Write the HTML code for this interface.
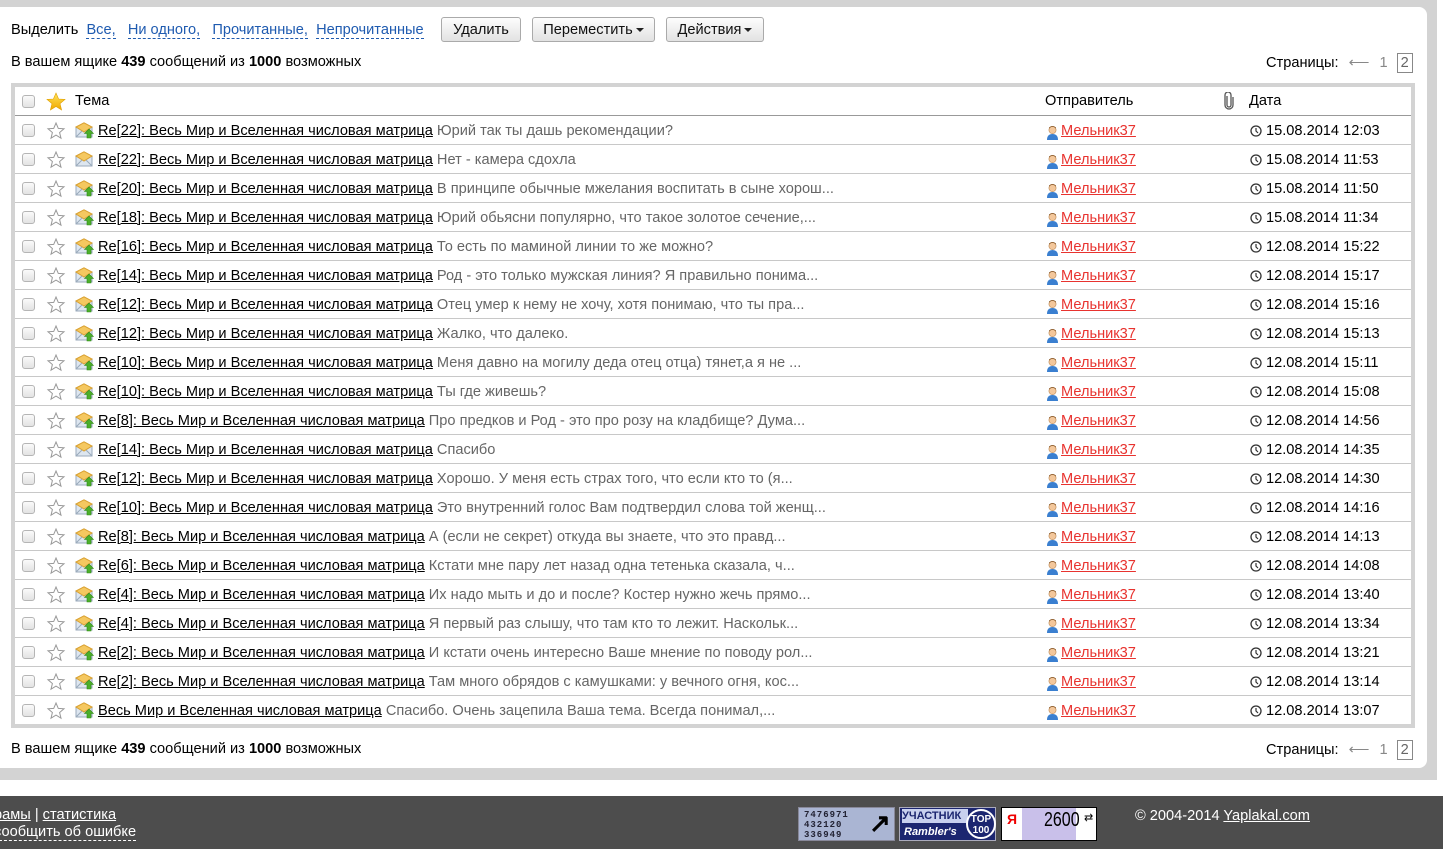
<!DOCTYPE html>
<html><head><meta charset="utf-8"><style>
*{margin:0;padding:0;box-sizing:border-box}
body{width:1443px;height:849px;overflow:hidden;background:#fff;font-family:"Liberation Sans",Arial,sans-serif;font-size:14.6px;color:#000;position:relative}
#gray{position:absolute;left:0;top:0;width:1437px;height:780px;background:#d3d3d3}
#panel{position:absolute;left:0;top:7px;width:1427px;height:761px;background:#fff;border-radius:0 8px 8px 0}
.abs{position:absolute;white-space:nowrap}
.dl{color:#1f5bb0;border-bottom:1px dashed #1f5bb0;text-decoration:none}
.btn{position:absolute;top:17px;height:25px;border:1px solid #aaa;border-radius:3px;background:linear-gradient(#fdfdfd,#e2e2e2);font-size:14.6px;line-height:24px;text-align:center;color:#111}
.tri{display:inline-block;width:0;height:0;border-left:4px solid transparent;border-right:4px solid transparent;border-top:4px solid #222;vertical-align:middle;margin-left:3px}
#tbl{position:absolute;left:11px;top:83px;width:1404px;height:645px;border:4px solid #d3d3d3;background:#fff}
.row{position:absolute;left:0;width:1396px;height:29px;border-bottom:1px solid #c8c8c8}
.cb{position:absolute;left:7px;top:8px;width:13px;height:13px;border:1px solid #b5b5b5;border-radius:3px;background:linear-gradient(#fafafa,#e3e3e3)}
.st{position:absolute;left:31px;top:5px}
.env{position:absolute;left:60px;top:6px}
.subj{position:absolute;left:83px;top:7px;white-space:nowrap}
.subj a{color:#000;text-decoration:underline}
.subj span{color:#666}
.snd{position:absolute;left:1031px;top:7px}
.snd a{color:#e8332f;text-decoration:underline;position:absolute;left:15px;top:0px}
.dt{position:absolute;left:1235px;top:7px;white-space:nowrap}
.dt svg{vertical-align:-2px;margin-right:4px}
#foot{position:absolute;left:0;top:796px;width:1443px;height:53px;background:#4d4d4d;color:#fff}
#foot a{color:#fff;text-decoration:underline}
.pg{position:absolute;white-space:nowrap}
.pg .ar{color:#888;margin:0 10px}
.pg .n1{color:#888;margin-right:9px}
.pg .n2{display:inline-block;border:1px solid #888;color:#666;padding:0 3px;line-height:18px}
</style></head><body>
<div id="gray"></div>
<div id="panel"></div>
<div class="abs" style="left:11px;top:22px">Выделить &nbsp;<a class="dl">Все,</a>&nbsp;&nbsp; <a class="dl">Ни одного,</a>&nbsp;&nbsp; <a class="dl">Прочитанные,</a>&nbsp;&nbsp;<a class="dl">Непрочитанные</a></div>
<div class="btn" style="left:441px;width:80px">Удалить</div>
<div class="btn" style="left:532px;width:123px">Переместить<span class="tri"></span></div>
<div class="btn" style="left:666px;width:98px">Действия<span class="tri"></span></div>
<div class="abs" style="left:11px;top:54px">В вашем ящике <b>439</b> сообщений из <b>1000</b> возможных</div>
<div class="pg" style="left:1266px;top:53px">Страницы:<span class="ar">⟵</span><span class="n1">1</span><span class="n2">2</span></div>
<div id="tbl">
<div class="row" style="top:0;height:29px;border-bottom:1px solid #999">
<div class="cb"></div>
<svg class="st" width="20" height="20" viewBox="0 0 20 20"><defs><linearGradient id="g" x1="0" y1="0" x2="0" y2="1"><stop offset="0" stop-color="#ffe45c"/><stop offset="1" stop-color="#f0a800"/></linearGradient></defs><polygon points="10,1 12.6,7 19,7.4 14,11.6 15.6,18 10,14.5 4.4,18 6,11.6 1,7.4 7.4,7" fill="url(#g)" stroke="#e0a000" stroke-width=".6"/></svg>
<div class="subj" style="left:60px;top:6px">Тема</div>
<div class="abs" style="left:1030px;top:6px">Отправитель</div>
<svg class="abs" style="left:1209px;top:5px" width="10" height="18" viewBox="0 0 10 18"><path d="M3 4v9a2 2 0 0 0 4 0V3a3 3 0 0 0-6 0v10a4 4 0 0 0 8 0V5" fill="none" stroke="#555" stroke-width="1.3"/></svg>
<div class="abs" style="left:1234px;top:6px">Дата</div>
</div>
</div>
<div id="foot">
<div class="abs" style="left:-6px;top:11px;line-height:17px"><a>рамы</a> | <a>статистика</a><br><a style="text-decoration:none;border-bottom:1px dashed #fff">сообщить об ошибке</a></div>
<div class="abs" style="left:798px;top:11px;width:97px;height:34px;background:#aab5d3;border:1px solid #889">
<div style="position:absolute;left:5px;top:2px;font:bold 9px/10px 'Liberation Mono',monospace;color:#223;letter-spacing:1px">7476971<br>432120<br>336949</div>
<div style="position:absolute;left:70px;top:0;font:bold 26px/30px 'Liberation Sans';color:#000">↗</div></div>
<div class="abs" style="left:899px;top:11px;width:97px;height:34px;background:#1c2670;border:1px solid #aab">
<div style="position:absolute;left:2px;top:1px;width:66px;height:14px;background:#c8d0ee;color:#1c2670;font:bold 11px/14px 'Liberation Sans'">УЧАСТНИК</div>
<div style="position:absolute;left:4px;top:17px;color:#fff;font:bold italic 11px/14px 'Liberation Sans'">Rambler's</div>
<div style="position:absolute;left:66px;top:1px;width:30px;height:30px;border-radius:50%;background:#1c2670;border:2px solid #fff;color:#fff;font:bold 10px/11px 'Liberation Sans';text-align:center;padding-top:3px">TOP<br>100</div></div>
<div class="abs" style="left:1001px;top:11px;width:96px;height:34px;background:#fff;border:1px solid #000">
<div style="position:absolute;left:20px;top:0;width:54px;height:32px;background:#c9c0ea"></div>
<div style="position:absolute;left:5px;top:3px;color:#e00;font:bold 14px 'Liberation Sans'">Я</div>
<div style="position:absolute;left:42px;top:1px;color:#000;font:20px 'Liberation Sans';transform:scaleX(.8);transform-origin:left">2600</div>
<div style="position:absolute;left:82px;top:3px;color:#000;font:11px 'Liberation Sans'">⇄</div></div>
<div class="abs" style="left:1135px;top:12px">© 2004-2014 <a>Yaplakal.com</a></div>
</div>
<div class="abs" style="left:11px;top:741px">В вашем ящике <b>439</b> сообщений из <b>1000</b> возможных</div>
<div class="pg" style="left:1266px;top:740px">Страницы:<span class="ar">⟵</span><span class="n1">1</span><span class="n2">2</span></div>
<script>
var d=[["Re[22]: Весь Мир и Вселенная числовая матрица","Юрий так ты дашь рекомендации?","15.08.2014 12:03",1],
["Re[22]: Весь Мир и Вселенная числовая матрица","Нет - камера сдохла","15.08.2014 11:53",0],
["Re[20]: Весь Мир и Вселенная числовая матрица","В принципе обычные мжелания воспитать в сыне хорош...","15.08.2014 11:50",1],
["Re[18]: Весь Мир и Вселенная числовая матрица","Юрий обьясни популярно, что такое золотое сечение,...","15.08.2014 11:34",1],
["Re[16]: Весь Мир и Вселенная числовая матрица","То есть по маминой линии то же можно?","12.08.2014 15:22",1],
["Re[14]: Весь Мир и Вселенная числовая матрица","Род - это только мужская линия? Я правильно понима...","12.08.2014 15:17",1],
["Re[12]: Весь Мир и Вселенная числовая матрица","Отец умер к нему не хочу, хотя понимаю, что ты пра...","12.08.2014 15:16",1],
["Re[12]: Весь Мир и Вселенная числовая матрица","Жалко, что далеко.","12.08.2014 15:13",1],
["Re[10]: Весь Мир и Вселенная числовая матрица","Меня давно на могилу деда отец отца) тянет,а я не ...","12.08.2014 15:11",1],
["Re[10]: Весь Мир и Вселенная числовая матрица","Ты где живешь?","12.08.2014 15:08",1],
["Re[8]: Весь Мир и Вселенная числовая матрица","Про предков и Род - это про розу на кладбище? Дума...","12.08.2014 14:56",1],
["Re[14]: Весь Мир и Вселенная числовая матрица","Спасибо","12.08.2014 14:35",0],
["Re[12]: Весь Мир и Вселенная числовая матрица","Хорошо. У меня есть страх того, что если кто то (я...","12.08.2014 14:30",1],
["Re[10]: Весь Мир и Вселенная числовая матрица","Это внутренний голос Вам подтвердил слова той женщ...","12.08.2014 14:16",1],
["Re[8]: Весь Мир и Вселенная числовая матрица","А (если не секрет) откуда вы знаете, что это правд...","12.08.2014 14:13",1],
["Re[6]: Весь Мир и Вселенная числовая матрица","Кстати мне пару лет назад одна тетенька сказала, ч...","12.08.2014 14:08",1],
["Re[4]: Весь Мир и Вселенная числовая матрица","Их надо мыть и до и после? Костер нужно жечь прямо...","12.08.2014 13:40",1],
["Re[4]: Весь Мир и Вселенная числовая матрица","Я первый раз слышу, что там кто то лежит. Наскольк...","12.08.2014 13:34",1],
["Re[2]: Весь Мир и Вселенная числовая матрица","И кстати очень интересно Ваше мнение по поводу рол...","12.08.2014 13:21",1],
["Re[2]: Весь Мир и Вселенная числовая матрица","Там много обрядов с камушками: у вечного огня, кос...","12.08.2014 13:14",1],
["Весь Мир и Вселенная числовая матрица","Спасибо. Очень зацепила Ваша тема. Всегда понимал,...","12.08.2014 13:07",1]];
var h="";
d.forEach(function(r,i){
var last=i==d.length-1;
h+='<div class="row" style="top:'+(29+i*29)+'px'+(last?';border-bottom:none':'')+'"><div class="cb"></div>'+
'<svg class="st" width="20" height="20" viewBox="0 0 20 20"><polygon points="10,2 12.3,7.4 18,7.8 13.6,11.5 15,17.2 10,14.1 5,17.2 6.4,11.5 2,7.8 7.7,7.4" fill="#fff" stroke="#999" stroke-width="1"/></svg>'+
'<svg class="env" width="19" height="17" viewBox="0 0 19 17"><rect x="1" y="5" width="16" height="10" fill="#dde6f0" stroke="#9aaabb"/><path d="M1 5 L9 0.8 L17 5 L9 10 Z" fill="#f5c860" stroke="#d9a030"/><path d="M1 15 L7 9 M17 15 L11 9" stroke="#9aaabb" fill="none"/>'+
(r[3]?'<path d="M14 7 L18.5 11.5 H16 V16 H12 V11.5 H9.5 Z" fill="#4caf2a" stroke="#2e8a14" stroke-width=".6"/>':'')+'</svg>'+
'<div class="subj"><a>'+r[0]+'</a> <span>'+r[1]+'</span></div>'+
'<div class="snd"><svg width="13" height="16" viewBox="0 0 13 16" style="position:absolute;left:0;top:2px"><circle cx="6.5" cy="5" r="3.6" fill="#f3c79b" stroke="#b8844f" stroke-width=".6"/><path d="M3 3.5 Q6.5 0 10 3.5 L10 2.5 Q6.5 -0.5 3 2.5Z" fill="#8a5a2a"/><path d="M1 15 Q1 9 6.5 9 Q12 9 12 15Z" fill="#3a7fd0"/></svg><a>Мельник37</a></div>'+
'<div class="dt"><svg width="12" height="12" viewBox="0 0 12 12"><circle cx="6" cy="6" r="5" fill="#fff" stroke="#333" stroke-width="1.3"/><path d="M6 3v3l2 2" stroke="#333" stroke-width="1.2" fill="none"/></svg>'+r[2]+'</div></div>';
});
document.getElementById("tbl").insertAdjacentHTML("beforeend",h);
</script>
</body></html>
